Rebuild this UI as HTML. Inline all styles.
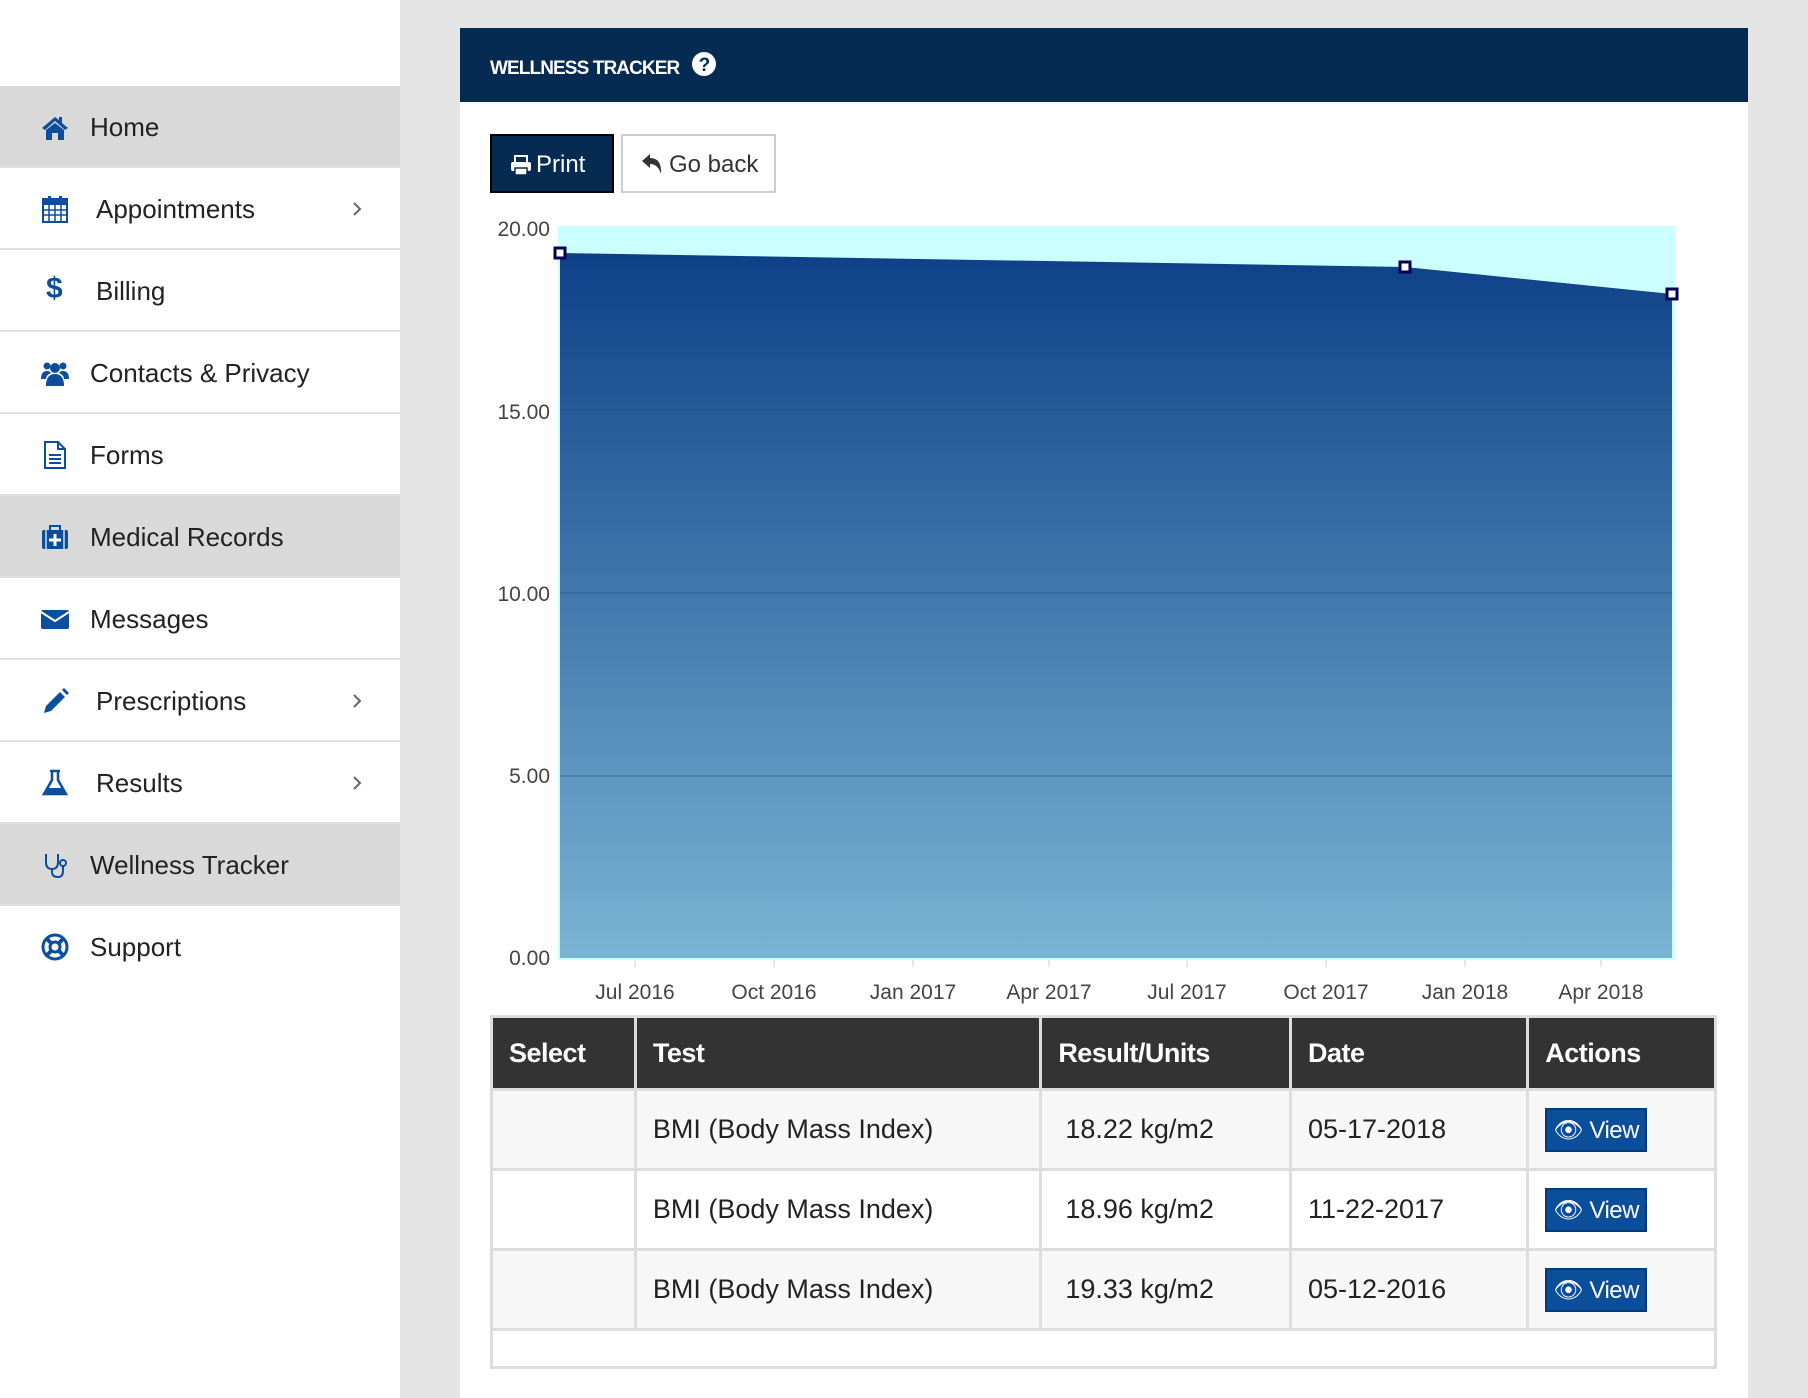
<!DOCTYPE html>
<html style="width:1808px;height:1398px;overflow:hidden"><head><meta charset="utf-8"><style>
*{margin:0;padding:0;box-sizing:border-box}
body{width:1808px;height:1398px;background:#e4e4e4;font-family:"Liberation Sans",sans-serif;position:relative;overflow:hidden;color:#222}
#side{position:absolute;left:0;top:0;width:400px;height:1398px;background:#fff}
.it{position:absolute;left:0;width:400px;height:82px;border-bottom:2px solid #e0e0e0;background:#fff}
.it.g{background:#d9d9d9}
.it .ic{position:absolute;left:40px;top:27px;width:30px;height:28px}
.it .t{position:absolute;top:26px;font-size:26px;color:#222}
.it .ch{position:absolute;left:350px;top:31px;width:14px;height:20px}
#panel{position:absolute;left:460px;top:28px;width:1288px;height:1370px;background:#fff}
#hdr{position:absolute;left:0;top:0;width:1288px;height:74px;background:#062b52;color:#fff;font-weight:bold;font-size:19px;letter-spacing:-0.9px}
.btn{position:absolute;font-size:24px;height:59px}
table{position:absolute;left:490px;top:1015px;width:1227px;border-collapse:collapse;font-size:27px}
td,th{border:3px solid #ddd;text-align:left;padding:0 16px;height:80px}
th{background:#333;color:#fff;height:73px;letter-spacing:-0.5px}
tr.o td{background:#f7f7f7}
.vb{display:inline-block;background:#0b4f9c;border:2px solid #063a75;color:#fff;font-size:24px;padding:6px 6px;height:44px;letter-spacing:-0.5px}
</style></head><body>
<div id="side">
 <div class="it g" style="top:86px"><svg class="ic" viewBox="0 0 30 28"><path d="M15 4 L2 15 L5 17 L15 8 L25 17 L28 15 L22 10 V4 H19 V7 Z M6 17 V27 H12 V20 H18 V27 H24 V17 L15 10 Z" fill="#0d4e9c"/></svg><div class="t" style="left:90px">Home</div></div>
 <div class="it" style="top:168px"><svg class="ic" viewBox="0 0 30 28"><rect x="3" y="4" width="24" height="23" fill="none" stroke="#0d4e9c" stroke-width="2"/><rect x="3" y="4" width="24" height="6" fill="#0d4e9c"/><path d="M4 15H26M4 20H26M9 10V27M15 10V27M21 10V27" stroke="#0d4e9c" stroke-width="1.5"/><rect x="8" y="1" width="3" height="6" fill="#0d4e9c"/><rect x="19" y="1" width="3" height="6" fill="#0d4e9c"/></svg><div class="t" style="left:96px">Appointments</div><svg class="ch" viewBox="0 0 14 20"><path d="M4 4 L10 10 L4 16" stroke="#666" stroke-width="2" fill="none"/></svg></div>
 <div class="it" style="top:250px"><div class="ic" style="color:#0d4e9c;font-size:30px;font-weight:bold;top:22px;left:46px">$</div><div class="t" style="left:96px">Billing</div></div>
 <div class="it" style="top:332px"><svg class="ic" viewBox="0 0 30 28"><circle cx="7" cy="7" r="3.5" fill="#0d4e9c"/><circle cx="23" cy="7" r="3.5" fill="#0d4e9c"/><circle cx="15" cy="9" r="5" fill="#0d4e9c"/><path d="M1 20 Q1 12 7 12 Q10 12 11 14 Q6 16 6 20Z M29 20 Q29 12 23 12 Q20 12 19 14 Q24 16 24 20Z M6 27 Q6 15 15 15 Q24 15 24 27Z" fill="#0d4e9c"/></svg><div class="t" style="left:90px">Contacts &amp; Privacy</div></div>
 <div class="it" style="top:414px"><svg class="ic" viewBox="0 0 30 28"><path d="M5 1 H18 L25 8 V27 H5 Z" fill="none" stroke="#0d4e9c" stroke-width="2"/><path d="M18 1V8H25M9 14H21M9 18H21M9 22H21" stroke="#0d4e9c" stroke-width="2" fill="none"/></svg><div class="t" style="left:90px">Forms</div></div>
 <div class="it g" style="top:496px"><svg class="ic" viewBox="0 0 30 28"><rect x="2" y="7" width="26" height="19" rx="2" fill="#0d4e9c"/><rect x="10" y="3" width="10" height="6" fill="none" stroke="#0d4e9c" stroke-width="2"/><path d="M15 11V23M9 17H21" stroke="#fff" stroke-width="3"/><path d="M6 7V26M24 7V26" stroke="#d9d9d9" stroke-width="1.5"/></svg><div class="t" style="left:90px">Medical Records</div></div>
 <div class="it" style="top:578px"><svg class="ic" viewBox="0 0 30 28"><rect x="1" y="5" width="28" height="19" rx="2" fill="#0d4e9c"/><path d="M1 7 L15 16 L29 7" stroke="#fff" stroke-width="2" fill="none"/></svg><div class="t" style="left:90px">Messages</div></div>
 <div class="it" style="top:660px"><svg class="ic" viewBox="0 0 30 28"><path d="M4 26 L6 19 L20 5 L25 10 L11 24 Z M22 3 L24 1 L29 6 L27 8Z" fill="#0d4e9c"/></svg><div class="t" style="left:96px">Prescriptions</div><svg class="ch" viewBox="0 0 14 20"><path d="M4 4 L10 10 L4 16" stroke="#666" stroke-width="2" fill="none"/></svg></div>
 <div class="it" style="top:742px"><svg class="ic" viewBox="0 0 30 28"><path d="M10 2H20M12 2V11L4 25H26L18 11V2" fill="none" stroke="#0d4e9c" stroke-width="2.5"/><path d="M8 19H22L25 25H5Z" fill="#0d4e9c"/></svg><div class="t" style="left:96px">Results</div><svg class="ch" viewBox="0 0 14 20"><path d="M4 4 L10 10 L4 16" stroke="#666" stroke-width="2" fill="none"/></svg></div>
 <div class="it g" style="top:824px"><svg class="ic" viewBox="0 0 30 28"><path d="M6 3 V11 Q6 18 12 18 Q18 18 18 11 V3 M12 18 V21 Q12 26 18 26 Q23 26 23 20 V15" fill="none" stroke="#0d4e9c" stroke-width="2"/><circle cx="23" cy="12" r="3" fill="none" stroke="#0d4e9c" stroke-width="2"/></svg><div class="t" style="left:90px">Wellness Tracker</div></div>
 <div class="it" style="top:906px;border-bottom:none"><svg class="ic" viewBox="0 0 30 28"><circle cx="15" cy="14" r="12" fill="none" stroke="#0d4e9c" stroke-width="3"/><circle cx="15" cy="14" r="5" fill="none" stroke="#0d4e9c" stroke-width="3"/><path d="M7 6L11 10M23 6L19 10M7 22L11 18M23 22L19 18" stroke="#0d4e9c" stroke-width="4"/></svg><div class="t" style="left:90px">Support</div></div>
</div>
<div id="panel">
 <div id="hdr"><span style="position:absolute;left:30px;top:30px">WELLNESS TRACKER</span>
  <svg style="position:absolute;left:231px;top:23px" width="26" height="26" viewBox="0 0 26 26"><circle cx="13" cy="13" r="12" fill="#fff"/><text x="13" y="20" text-anchor="middle" font-family="Liberation Sans" font-weight="bold" font-size="19" fill="#062b52">?</text></svg></div>
</div>
<div class="btn" style="left:490px;top:134px;width:124px;background:#062b52;border:2px solid #000;color:#fff">
 <svg style="position:absolute;left:18px;top:18px" width="22" height="22" viewBox="0 0 22 22"><rect x="5" y="2" width="12" height="7" fill="none" stroke="#fff" stroke-width="2"/><rect x="1" y="8" width="20" height="9" rx="2" fill="#fff"/><rect x="5" y="14" width="12" height="7" fill="#fff" stroke="#062b52" stroke-width="1.5"/></svg>
 <span style="position:absolute;left:44px;top:15px">Print</span></div>
<div class="btn" style="left:621px;top:134px;width:155px;background:#fff;border:2px solid #ccc;color:#333">
 <svg style="position:absolute;left:17px;top:16px" width="24" height="24" viewBox="0 0 24 24"><path d="M2 9 L10 2 V6 Q22 6 21 22 Q18 12 10 12 V16 Z" fill="#333"/></svg>
 <span style="position:absolute;left:46px;top:15px">Go back</span></div>
<svg style="position:absolute;left:0;top:0" width="1808" height="1010">
 <defs><linearGradient id="gr" x1="0" y1="0" x2="0" y2="1"><stop offset="0" stop-color="#0e4088"/><stop offset="1" stop-color="#7ab4d4"/></linearGradient></defs>
 <rect x="558" y="226" width="1117" height="734" fill="#ccffff"/>
 <path d="M560 253 L1405 267 L1672 294 L1672 958 L560 958Z" fill="url(#gr)"/>
 <g stroke="#20508a" stroke-width="1" opacity="0.6"><line x1="560" y1="410" x2="1672" y2="410"/><line x1="560" y1="593" x2="1672" y2="593"/><line x1="560" y1="776" x2="1672" y2="776"/></g>
 <g stroke="#ccc"><line x1="635" y1="960" x2="635" y2="967"/><line x1="774" y1="960" x2="774" y2="967"/><line x1="913" y1="960" x2="913" y2="967"/><line x1="1049" y1="960" x2="1049" y2="967"/><line x1="1187" y1="960" x2="1187" y2="967"/><line x1="1326" y1="960" x2="1326" y2="967"/><line x1="1465" y1="960" x2="1465" y2="967"/><line x1="1601" y1="960" x2="1601" y2="967"/></g>
 <g fill="#fff" stroke="#000050" stroke-width="3"><rect x="555" y="248" width="10" height="10"/><rect x="1400" y="262" width="10" height="10"/><rect x="1667" y="289" width="10" height="10"/></g>
 <g font-family="Liberation Sans" font-size="21" fill="#444" text-anchor="end"><text x="550" y="236">20.00</text><text x="550" y="419">15.00</text><text x="550" y="601">10.00</text><text x="550" y="783">5.00</text><text x="550" y="965">0.00</text></g>
 <g font-family="Liberation Sans" font-size="21" fill="#444" text-anchor="middle"><text x="635" y="999">Jul 2016</text><text x="774" y="999">Oct 2016</text><text x="913" y="999">Jan 2017</text><text x="1049" y="999">Apr 2017</text><text x="1187" y="999">Jul 2017</text><text x="1326" y="999">Oct 2017</text><text x="1465" y="999">Jan 2018</text><text x="1601" y="999">Apr 2018</text></g>
</svg>
<table>
 <colgroup><col style="width:144px"><col style="width:407px"><col style="width:250px"><col style="width:238px"><col style="width:188px"></colgroup>
 <tr><th>Select</th><th>Test</th><th>Result/Units</th><th>Date</th><th>Actions</th></tr>
 <tr class="o"><td></td><td>BMI (Body Mass Index)</td><td style="padding-left:23px">18.22 kg/m2</td><td>05-17-2018</td><td><span class="vb">👁 View</span></td></tr>
 <tr><td></td><td>BMI (Body Mass Index)</td><td style="padding-left:23px">18.96 kg/m2</td><td>11-22-2017</td><td><span class="vb">👁 View</span></td></tr>
 <tr class="o"><td></td><td>BMI (Body Mass Index)</td><td style="padding-left:23px">19.33 kg/m2</td><td>05-12-2016</td><td><span class="vb">👁 View</span></td></tr>
 <tr><td colspan="5" style="height:38px"></td></tr>
</table>
</body></html>
